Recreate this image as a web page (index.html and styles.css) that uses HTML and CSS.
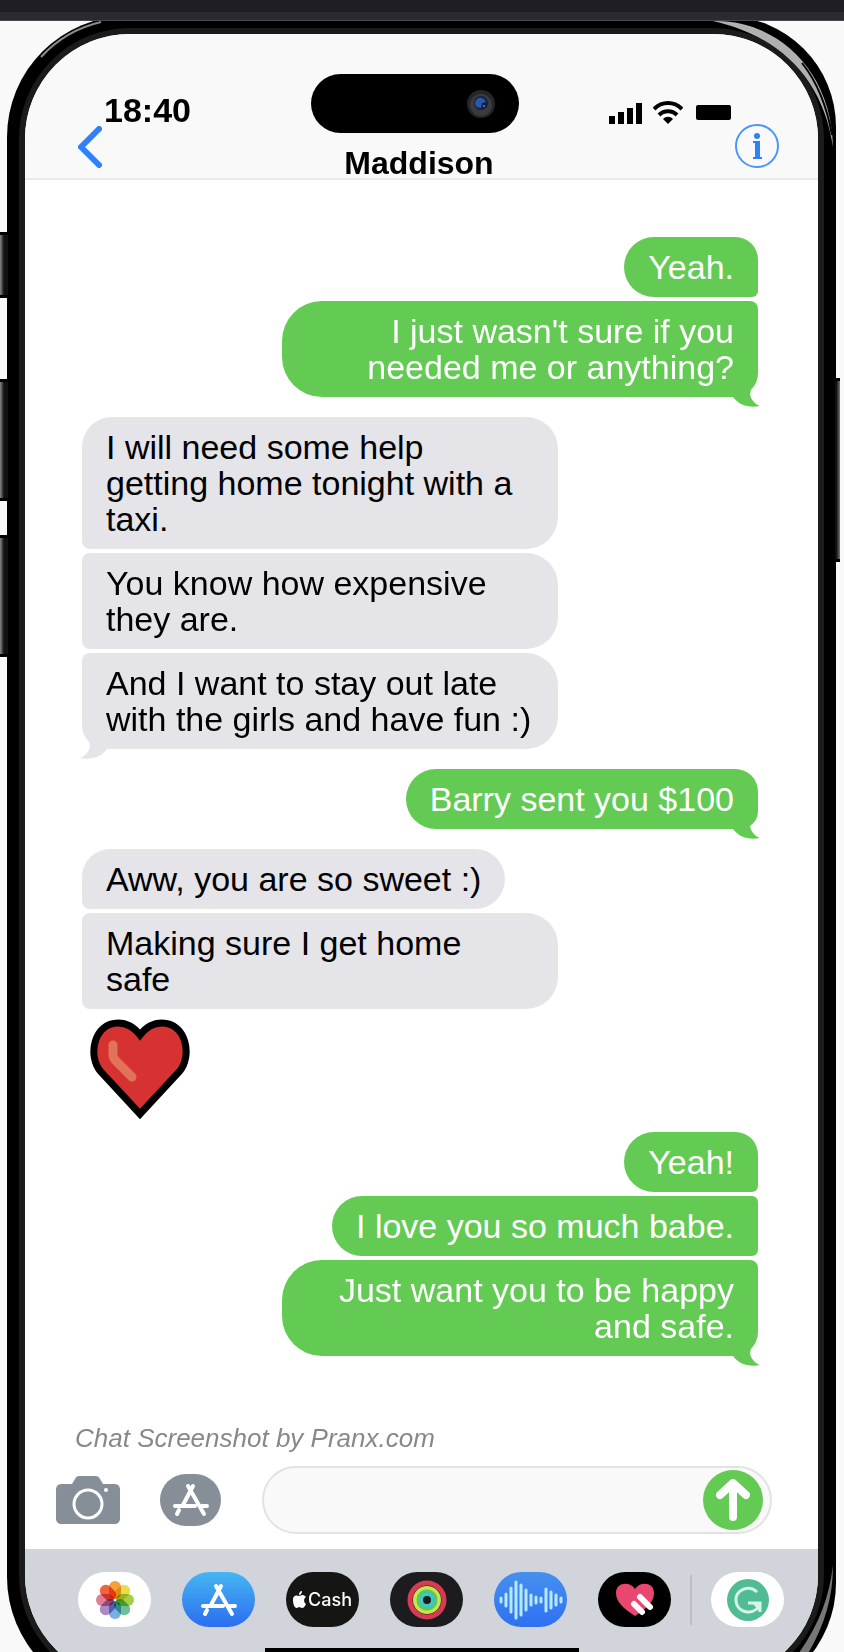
FILE: index.html
```html
<!DOCTYPE html>
<html lang="en">
<head>
  <meta charset="utf-8">
  <meta name="viewport" content="width=device-width, initial-scale=1">
  <title>Maddison</title>
  <link rel="stylesheet" href="styles.css">
</head>
<body>
  <!-- Shared shapes -->
  <svg class="defs" aria-hidden="true">
    <symbol id="tail-right" viewBox="0 0 28 22">
      <path d="M0 0h20l-2 9c1 6 5 10 10 12-4 1-9 1-13 0-6-1-11-5-14-9z"/>
    </symbol>
    <symbol id="tail-left" viewBox="0 0 28 22">
      <path d="M28 0H8l2 9c-1 6-5 10-10 12 4 1 9 1 13 0 6-1 11-5 14-9z"/>
    </symbol>
    <symbol id="app-store" viewBox="0 0 38 34">
      <g fill="none" stroke="#fff" stroke-width="4" stroke-linecap="round">
        <path d="M21 3L11 22M7 27l-2 4M16 3l16 28M3 23h20M30 23h5"/>
      </g>
    </symbol>
  </svg>

  <div class="page">
    <div class="browser-bar"></div>

    <div class="phone">
      <span class="side-button silent"></span>
      <span class="side-button volume-up"></span>
      <span class="side-button volume-down"></span>
      <span class="side-button power"></span>
      <svg class="shine shine-left" width="90" height="44" viewBox="0 0 90 44" aria-hidden="true">
        <path d="M6 40A118 118 0 0 1 66 5" fill="none" stroke="#8c8c8c" stroke-width="2"/>
      </svg>
      <svg class="shine shine-right" width="130" height="134" viewBox="0 0 130 134" aria-hidden="true">
        <path d="M8 2C70 0 127 50 128 128 118 62 78 18 8 2z" fill="#b0b0b0"/>
        <path d="M97 44c16 20 25 44 30 72" fill="none" stroke="#000" stroke-width="2"/>
      </svg>
      <svg class="shine shine-bottom" width="60" height="110" viewBox="0 0 60 110" aria-hidden="true">
        <path d="M57 6c0 34-9 62-27 92H20C42 68 53 40 57 6z" fill="#777"/>
      </svg>

      <div class="screen">
        <header class="header">
          <div class="header-left">
            <time class="clock">18:40</time>
            <button class="icon-button" type="button" aria-label="Back">
              <svg width="24" height="42" viewBox="0 0 24 42"><path d="M21 3L3 21l18 18" fill="none" stroke="#2f80fb" stroke-width="6" stroke-linecap="round" stroke-linejoin="round"/></svg>
            </button>
          </div>
          <div class="header-center">
            <div class="island">
              <svg width="30" height="30" viewBox="0 0 30 30" aria-hidden="true">
                <circle cx="15" cy="15" r="14" fill="#252629"/>
                <circle cx="15" cy="16" r="11" fill="#393b3e"/>
                <circle cx="15" cy="14" r="7" fill="#15213f"/>
                <path d="M9 15c0-5 5-8 9-5l2 3-4 1-1 5c-3 0-5-1-6-4z" fill="#285aad"/>
                <circle cx="18" cy="17" r="1" fill="#7888aa"/>
              </svg>
            </div>
            <h1 class="contact-name">Maddison</h1>
          </div>
          <div class="header-right">
            <div class="status">
              <svg width="36" height="24" viewBox="0 0 36 24" aria-hidden="true">
                <path d="M1 16h6v8H1zM10 12h6v12h-6zM19 8h6v16h-6zM28 3h6v21h-6z"/>
              </svg>
              <svg width="30" height="24" viewBox="0 0 30 24" aria-hidden="true">
                <g fill="none" stroke="#000" stroke-width="4">
                  <path d="M1 9c8-8 20-8 28 0M6 15c5-5 13-5 18 0"/>
                </g>
                <path d="M10 19c3-3 7-3 10 0l-5 5z"/>
              </svg>
              <span class="battery"></span>
            </div>
            <button class="icon-button" type="button" aria-label="Contact info">
              <svg width="44" height="44" viewBox="0 0 44 44">
                <circle cx="22" cy="22" r="21" fill="none" stroke="#4a96fc" stroke-width="2"/>
                <circle cx="22" cy="12" r="3" fill="#2f80fb"/>
                <path d="M18 17h7v16h2v2h-9v-2h2V19h-2z" fill="#2f80fb"/>
              </svg>
            </button>
          </div>
        </header>

        <main class="chat">
          <section class="group sent">
            <p class="bubble">Yeah.</p>
            <p class="bubble">I just wasn't sure if you needed me or anything?<svg class="tail"><use href="#tail-right"/></svg></p>
          </section>
          <section class="group received">
            <p class="bubble">I will need some help getting home tonight with a taxi.</p>
            <p class="bubble">You know how expensive they are.</p>
            <p class="bubble">And I want to stay out late with the girls and have fun :)<svg class="tail"><use href="#tail-left"/></svg></p>
          </section>
          <section class="group sent">
            <p class="bubble">Barry sent you $100<svg class="tail"><use href="#tail-right"/></svg></p>
          </section>
          <section class="group received">
            <p class="bubble">Aww, you are so sweet :)</p>
            <p class="bubble">Making sure I get home safe</p>
            <svg class="heart" width="100" height="101" viewBox="0 0 100 101" role="img" aria-label="Red heart">
              <path d="M50 95L11 53C-3 37 4 4 28 4c9 0 16 4 22 12C56 8 63 4 72 4c24 0 31 33 17 49z" fill="#d63231" stroke="#000" stroke-width="7"/>
              <path d="M23 26v9c0 3 1 5 3 7l16 16" fill="none" stroke="#e0735a" stroke-width="9" stroke-linecap="round" stroke-linejoin="round"/>
            </svg>
          </section>
          <section class="group sent">
            <p class="bubble">Yeah!</p>
            <p class="bubble">I love you so much babe.</p>
            <p class="bubble">Just want you to be happy and safe.<svg class="tail"><use href="#tail-right"/></svg></p>
          </section>
        </main>

        <p class="credit">Chat Screenshot by Pranx.com</p>

        <form class="composer">
          <button class="icon-button" type="button" aria-label="Camera">
            <svg width="64" height="48" viewBox="0 0 64 48">
              <path d="M6 8h10l3-5c1-2 2-3 4-3h16c3 0 4 1 5 3l3 5h11c4 0 6 2 6 6v28c0 4-2 6-6 6H6c-4 0-6-2-6-6V14c0-4 2-6 6-6z" fill="#868e98"/>
              <circle cx="32" cy="28" r="14" fill="none" stroke="#fff" stroke-width="3"/>
              <circle cx="50" cy="14" r="2" fill="#fff"/>
            </svg>
          </button>
          <button class="icon-button store-button" type="button" aria-label="Apps">
            <svg width="38" height="34"><use href="#app-store"/></svg>
          </button>
          <div class="message-box">
            <input class="message-input" type="text" aria-label="Message">
            <button class="icon-button send" type="button" aria-label="Send">
              <svg width="34" height="42" viewBox="0 0 34 42"><path d="M17 5v33M4 16L17 4l13 12" fill="none" stroke="#fff" stroke-width="8" stroke-linecap="round" stroke-linejoin="round"/></svg>
            </button>
          </div>
        </form>

        <nav class="dock">
          <button class="app photos" type="button" aria-label="Photos">
            <svg width="38" height="38" viewBox="-19 -19 38 38">
              <g class="petals">
                <rect x="-6" y="-19" width="12" height="18" rx="6" fill="#f5a13a"/>
                <rect x="-6" y="-19" width="12" height="18" rx="6" fill="#e9dc4c" transform="rotate(45)"/>
                <rect x="-6" y="-19" width="12" height="18" rx="6" fill="#a5cf4b" transform="rotate(90)"/>
                <rect x="-6" y="-19" width="12" height="18" rx="6" fill="#6dbf97" transform="rotate(135)"/>
                <rect x="-6" y="-19" width="12" height="18" rx="6" fill="#75b0e8" transform="rotate(180)"/>
                <rect x="-6" y="-19" width="12" height="18" rx="6" fill="#a98bc8" transform="rotate(225)"/>
                <rect x="-6" y="-19" width="12" height="18" rx="6" fill="#dc7f97" transform="rotate(270)"/>
                <rect x="-6" y="-19" width="12" height="18" rx="6" fill="#ee6246" transform="rotate(315)"/>
              </g>
            </svg>
          </button>
          <button class="app store" type="button" aria-label="App Store">
            <svg width="38" height="34"><use href="#app-store"/></svg>
          </button>
          <button class="app cash" type="button">
            <svg width="13" height="17" viewBox="0 0 13 17" aria-hidden="true">
              <path d="M9 0c0 2-1 4-3 4 0-2 1-4 3-4zM6 5c1 0 2-1 4-1 1 0 2 1 3 2-3 2-2 6 0 7-1 2-2 4-4 4-1 0-2-1-3-1s-1 1-2 1c-3 0-4-5-4-8 0-5 4-5 6-4z" fill="#fff"/>
            </svg>
            <span>Cash</span>
          </button>
          <button class="app activity" type="button" aria-label="Activity">
            <svg width="40" height="40" viewBox="0 0 40 40" fill="none">
              <circle cx="20" cy="20" r="17" stroke="#d93a53" stroke-width="5"/>
              <circle cx="20" cy="20" r="12" stroke="#c7e24a" stroke-width="4"/>
              <circle cx="20" cy="20" r="9" stroke="#55c867" stroke-width="3"/>
              <circle cx="20" cy="20" r="6" stroke="#3fc9ba" stroke-width="4"/>
            </svg>
          </button>
          <button class="app audio" type="button" aria-label="Audio">
            <svg width="66" height="40" viewBox="0 0 66 40">
              <path d="M3 18v4M8 14v12M13 8v24M18 2v36M23 5v30M28 10v20M33 15v10M38 17v6M43 18v4M48 9v22M53 12v16M58 15v10M63 18v4" fill="none" stroke="#b5e9fd" stroke-width="3" stroke-linecap="round"/>
            </svg>
          </button>
          <button class="app touch" type="button" aria-label="Digital Touch">
            <svg width="40" height="34" viewBox="0 0 40 34">
              <path d="M20 33C9 26 1 19 1 10 1-1 15-2 20 6c5-8 19-7 19 4 0 9-8 16-19 23z" fill="#ea4770"/>
              <path d="M25 14l10 10M19 21l8 8" stroke="#fff" stroke-width="6" stroke-linecap="round"/>
            </svg>
          </button>
          <span class="dock-divider"></span>
          <button class="app grammar" type="button" aria-label="Grammar">
            <svg width="44" height="42" viewBox="0 0 44 42">
              <circle cx="22" cy="21" r="21" fill="#50bc93"/>
              <path d="M31 13c-8-8-22-2-21 9 1 12 17 15 23 5M22 24h12v9" fill="none" stroke="#d4f6ea" stroke-width="3"/>
              <path d="M27 25h7v8z" fill="#d4f6ea"/>
            </svg>
          </button>
        </nav>
        <div class="home-indicator"></div>
      </div>
    </div>
  </div>
</body>
</html>
```

FILE: styles.css
```css
* {
  margin: 0;
  padding: 0;
  box-sizing: border-box;
}

body {
  background: #f9f9f9;
  color: #000;
  font-family: "Liberation Sans", Arial, Helvetica, sans-serif;
}

svg {
  display: block;
}

.defs {
  position: absolute;
  width: 0;
  height: 0;
}

.page {
  overflow: hidden;
}

.browser-bar {
  position: relative;
  z-index: 2;
  height: 21px;
  background: #2b2a30;
  border-top: 12px solid #1f1e24;
  border-bottom: 1px solid #49484d;
}

/* Phone frame, runs off the bottom of the page */
.phone {
  position: relative;
  margin: -5px 8px -46px 7px;
  padding: 12px;
  background: #000;
  border-radius: 121px 111px 115px 121px;
}

.screen {
  overflow: hidden;
  background: #fff;
  border: 6px solid #1b1b1b;
  border-radius: 111px;
}

.side-button {
  position: absolute;
  left: -7px;
  width: 8px;
  background: linear-gradient(to right, #888, #111 50%);
  border: solid #000;
  border-width: 3px 0;
}

.silent {
  top: 216px;
  height: 66px;
}

.volume-up {
  top: 363px;
  height: 122px;
}

.volume-down {
  top: 519px;
  height: 122px;
}

.power {
  top: 362px;
  right: -4px;
  left: auto;
  width: 5px;
  height: 184px;
  background: linear-gradient(to left, #777, #111 70%);
}

.shine {
  position: absolute;
}

.shine-left {
  top: 1px;
  left: 28px;
}

.shine-right {
  top: 3px;
  right: 1px;
}

.shine-bottom {
  right: 0;
  bottom: 29px;
}

/* Header */
.header {
  display: grid;
  grid-template-columns: 1fr auto 1fr;
  padding: 0 39px 0 26px;
  background: #f9f9f9;
  border-bottom: 2px solid #ebebeb;
}

.icon-button {
  display: flex;
  flex: none;
  align-items: center;
  justify-content: center;
  background: none;
  border: 0;
  cursor: pointer;
}

.header-left {
  display: flex;
  flex-direction: column;
  align-items: flex-start;
  padding: 60px 0 0 27px;
}

.clock {
  margin-left: 26px;
  font-size: 34px;
  font-weight: bold;
  line-height: 32px;
}

.header-center {
  padding-top: 40px;
}

.island {
  display: flex;
  align-items: center;
  justify-content: flex-end;
  width: 208px;
  height: 59px;
  margin-bottom: 16px;
  padding-right: 23px;
  background: #000;
  border-radius: 30px;
}

.contact-name {
  padding-left: 8px;
  font-size: 32px;
  line-height: 29px;
  text-align: center;
}

.header-right {
  display: flex;
  flex-direction: column;
  align-items: flex-end;
  padding-top: 66px;
}

.status {
  display: flex;
  align-items: center;
  gap: 9px;
  margin-right: 48px;
}

.battery {
  width: 35px;
  height: 15px;
  margin-left: 4px;
  background: #000;
  border-radius: 2px;
}

/* Conversation */
.chat {
  display: flex;
  flex-direction: column;
  gap: 20px;
  padding: 57px 60px 0 57px;
}

.group {
  display: flex;
  flex-direction: column;
  gap: 4px;
}

.sent {
  align-items: flex-end;
  text-align: right;
}

.received {
  align-items: flex-start;
}

.bubble {
  position: relative;
  max-width: 476px;
  padding: 12px 24px;
  font-size: 34px;
  line-height: 36px;
}

.sent .bubble {
  background: #63cb53;
  border-radius: 40px 8px 8px 40px;
  color: #fff;
}

.received .bubble {
  background: #e5e4e9;
  border-radius: 8px 32px 32px 8px;
}

.sent .bubble:first-child {
  border-top-right-radius: 30px;
}

.received .bubble:first-child {
  border-top-left-radius: 30px;
}

.sent .bubble:last-child {
  border-bottom-right-radius: 24px;
}

.received .bubble:last-child {
  border-bottom-left-radius: 24px;
}

.tail {
  position: absolute;
  bottom: -10px;
  width: 28px;
  height: 22px;
}

.sent .tail {
  right: -2px;
  fill: #63cb53;
}

.received .tail {
  left: -2px;
  fill: #e5e4e9;
}

.heart {
  margin: 6px 8px -8px;
}

.credit {
  margin-top: 66px;
  padding-left: 50px;
  color: #888;
  font-size: 26px;
  font-style: italic;
  line-height: 32px;
}

/* Message bar */
.composer {
  display: flex;
  align-items: center;
  padding: 12px 46px 15px 31px;
}

.store-button {
  width: 61px;
  height: 52px;
  margin: 0 41px 0 40px;
  background: #868e98;
  border-radius: 26px;
}

.message-box {
  display: flex;
  flex: 1;
  align-items: center;
  min-width: 0;
  height: 68px;
  padding-right: 7px;
  background: #f9f9f9;
  border: 2px solid #e2e2e2;
  border-radius: 34px;
}

.message-input {
  flex: 1;
  min-width: 0;
  height: 60px;
  padding-left: 30px;
  background: none;
  border: 0;
  outline: 0;
  font-family: inherit;
  font-size: 34px;
}

.send {
  width: 60px;
  height: 60px;
  background: #63cb53;
  border-radius: 50%;
}

/* App row */
.dock {
  display: flex;
  align-items: center;
  justify-content: space-between;
  padding: 23px 34px 21px 53px;
  background: #d1d4da;
}

.app {
  display: flex;
  align-items: center;
  justify-content: center;
  width: 73px;
  height: 55px;
  border: 0;
  border-radius: 28px;
  cursor: pointer;
}

.photos,
.grammar {
  background: #fff;
}

.petals rect {
  mix-blend-mode: multiply;
}

.store {
  background: linear-gradient(#45b6f2, #2c6df0);
}

.cash {
  gap: 2px;
  background: #151513;
  color: #fff;
  font-family: Inter, sans-serif;
  font-size: 18px;
  font-weight: 500;
}

.activity {
  background: #1c1b1d;
}

.audio {
  background: linear-gradient(#4690ee, #2f70f2);
}

.touch {
  background: #000;
}

.dock-divider {
  width: 2px;
  height: 50px;
  margin: 0 -12px;
  background: #babdc2;
}

.home-indicator {
  height: 32px;
  background: linear-gradient(#000, #000) 50% 0 / 314px 12px no-repeat #d1d4da;
}
```
